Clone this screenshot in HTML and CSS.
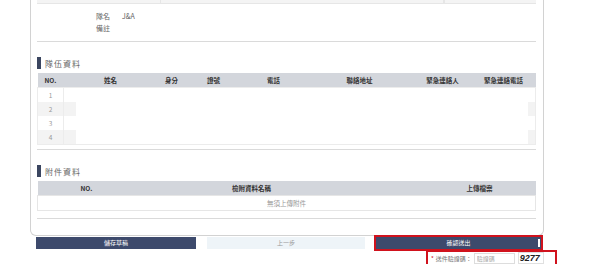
FILE: index.html
```html
<!DOCTYPE html>
<html lang="zh-Hant">

<head>
    <meta charset="UTF-8">
    <meta name="viewport" content="width=device-width, initial-scale=1.0">
    <title>報名資料確認</title>
    <link rel="stylesheet" href="styles.css">
</head>

<body>
    <div class="panel">
        <!-- end of previous table -->
        <div class="top-bar">
            <span class="top-cell"></span>
            <span class="top-cell"></span>
            <span class="top-cell"></span>
        </div>

        <div class="team-info">
            <div class="info-row"><span class="info-label">隊名</span><span class="info-value">J&amp;A</span></div>
            <div class="info-row"><span class="info-label">備註</span><span class="info-value"></span></div>
        </div>

        <div class="divider first"></div>

        <!-- Members -->
        <h2 class="section-title">隊伍資料</h2>
        <table class="grid members">
            <thead>
                <tr>
                    <th class="c-no">NO.</th>
                    <th style="width:94px">姓名</th>
                    <th style="width:28px">身分</th>
                    <th style="width:56px">證號</th>
                    <th style="width:64px">電話</th>
                    <th style="width:108px">聯絡地址</th>
                    <th style="width:58px">緊急連絡人</th>
                    <th>緊急連絡電話</th>
                </tr>
            </thead>
            <tbody>
                <tr><td class="c-no">1</td><td></td><td></td><td></td><td></td><td></td><td></td><td></td></tr>
                <tr class="stripe"><td class="c-no">2</td><td></td><td></td><td></td><td></td><td></td><td></td><td></td></tr>
                <tr><td class="c-no">3</td><td></td><td></td><td></td><td></td><td></td><td></td><td></td></tr>
                <tr class="stripe"><td class="c-no">4</td><td></td><td></td><td></td><td></td><td></td><td></td><td></td></tr>
            </tbody>
        </table>

        <div class="divider mid"></div>

        <!-- Attachments -->
        <h2 class="section-title">附件資料</h2>
        <table class="grid files">
            <thead>
                <tr>
                    <th style="width:98px">NO.</th>
                    <th style="width:232px">檢附資料名稱</th>
                    <th class="c-upload">上傳檔案</th>
                </tr>
            </thead>
            <tbody>
                <tr><td colspan="3" class="empty">無須上傳附件</td></tr>
            </tbody>
        </table>

        <div class="divider last"></div>
    </div>

    <div class="actions">
        <button class="btn btn-dark save">儲存草稿</button>
        <button class="btn btn-light prev">上一步</button>
        <button class="btn btn-dark submit marked">確認送出<span class="tick"></span></button>
    </div>

    <div class="captcha marked">
        <span class="req">*</span>
        <span class="captcha-label">送件驗證碼：</span>
        <input class="captcha-input" type="text" placeholder="驗證碼">
        <span class="captcha-code">9277</span>
    </div>
</body>

</html>
```

FILE: styles.css
```css
body {
    margin: 0;
    padding: 0;
    font-family: 'Noto Sans CJK TC', 'Noto Sans', sans-serif;
    background-color: #fff;
    color: #555;
}

.panel {
    width: 499px;
    margin-left: 30px;
    padding: 0 7px 0 6px;
    border: 1px solid #d2d2d2;
    border-top: none;
    border-radius: 0 0 6px 6px;
}

.top-bar {
    display: flex;
    height: 3px;
    background-color: #f4f4f4;
    border-bottom: 1px solid #e6e6e6;
}

.top-cell {
    border-right: 1px solid #e6e6e6;
}

.top-cell:nth-child(1) {
    width: 123px;
}

.top-cell:nth-child(2) {
    width: 282px;
}

.team-info {
    padding: 6px 0 0 59px;
    font-size: 7px;
    line-height: 12px;
    color: #666;
}

.info-row {
    display: flex;
    height: 12px;
}

.info-label {
    width: 26px;
}

.divider {
    height: 0;
    border-top: 1px solid #dadada;
}

.divider.first {
    margin-top: 7px;
}

.divider.mid {
    margin-top: 4px;
}

.divider.last {
    margin-top: 7px;
    margin-bottom: 16px;
}

.section-title {
    display: flex;
    align-items: center;
    margin: 15px 0 4px;
    height: 12px;
    font-size: 8px;
    font-weight: normal;
    letter-spacing: 1px;
    color: #666;
}

.section-title::before {
    content: "";
    width: 4px;
    height: 12px;
    margin-right: 4px;
    background-color: #3b4660;
}

.grid {
    width: 499px;
    border-collapse: collapse;
    table-layout: fixed;
    font-size: 6.5px;
}

.grid th {
    height: 14px;
    padding: 0;
    background-color: #d3d6dc;
    color: #333;
    font-weight: bold;
    text-align: center;
}

.grid td {
    height: 14px;
    padding: 0;
    text-align: center;
    color: #9a9a9a;
}

.members .c-no {
    width: 26px;
}

.members tbody {
    border: 1px solid #ececec;
}

.members tbody td.c-no {
    border-right: 1px solid #ececec;
}

.members tr.stripe {
    background: linear-gradient(to right, #f3f3f3 0, #f3f3f3 38px, #fff 38px, #fff 490px, #f3f3f3 490px);
}

.files tbody {
    border: 1px solid #e6e6e6;
}

.files .c-upload {
    padding-left: 56px;
}

.files td.empty {
    color: #999;
}

.actions {
    display: flex;
    gap: 11px;
    margin: 1px 0 0 36px;
}

.btn {
    height: 12px;
    padding: 0;
    border: none;
    font-family: 'Noto Sans CJK TC', sans-serif;
    font-size: 6px;
    line-height: 12px;
    cursor: pointer;
}

.btn-dark {
    background-color: #3d4a6c;
    color: #fff;
}

.btn-light {
    background-color: #eef4f8;
    color: #999;
}

.save {
    width: 160px;
}

.prev {
    width: 158px;
}

.submit {
    position: relative;
    width: 165px;
}

.marked {
    outline: 2px solid #d0121d;
}

.tick {
    position: absolute;
    right: 1px;
    top: 2px;
    width: 2px;
    height: 8px;
    background-color: #fff;
}

.captcha {
    display: flex;
    align-items: center;
    width: 124px;
    height: 12px;
    margin: 3px 0 0 428px;
    padding-left: 3px;
    font-size: 6px;
    color: #777;
}

.req {
    color: #d0121d;
    margin-right: 2px;
}

.captcha-input {
    width: 35px;
    height: 9px;
    margin-left: 2px;
    padding: 0 2px;
    border: 1px solid #ddd;
    font-family: 'Noto Sans CJK TC', sans-serif;
    font-size: 6px;
}

.captcha-input::placeholder {
    color: #aaa;
}

.captcha-code {
    margin-left: 3px;
    padding: 0 3px 0 1px;
    border: 1px solid #e0e0e0;
    font-family: 'Liberation Sans', sans-serif;
    font-size: 9px;
    font-weight: bold;
    font-style: italic;
    color: #222;
    line-height: 10px;
}
```
